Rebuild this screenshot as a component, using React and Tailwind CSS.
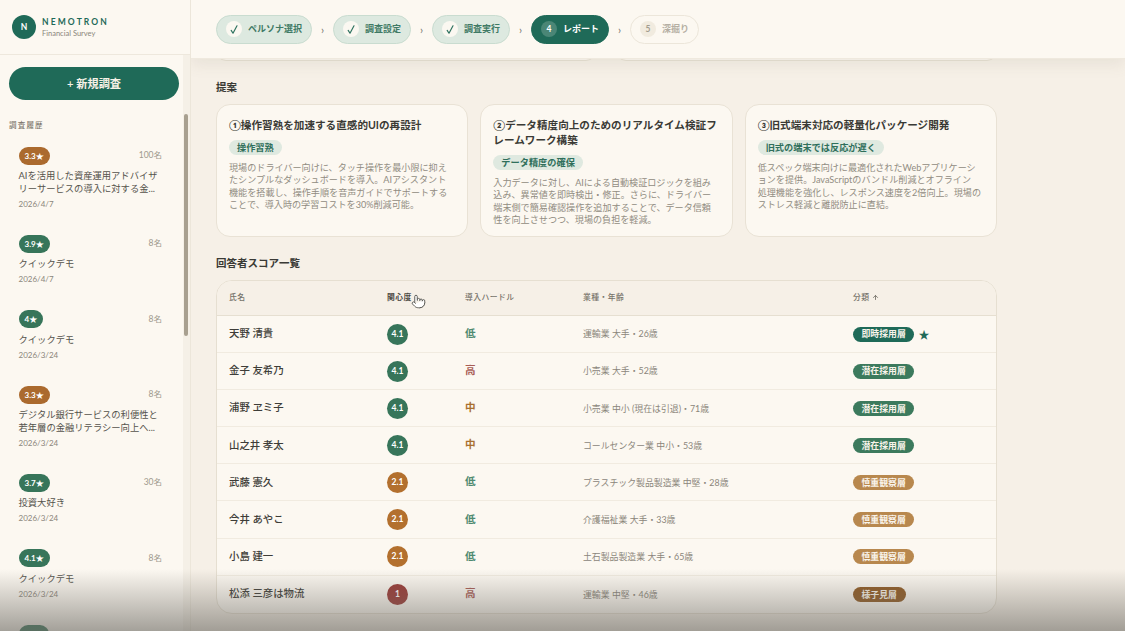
import React from "react";
import { Pointer, ArrowUp } from "lucide-react";

const hist = [
  { s: "3.3★", c: "bg-[#ab6a2e]", n: "100名", t: "AIを活用した資産運用アドバイザリーサービスの導入に対する金...", d: "2026/4/7" },
  { s: "3.9★", c: "bg-[#37755a]", n: "8名", t: "クイックデモ", d: "2026/4/7" },
  { s: "4★", c: "bg-[#37755a]", n: "8名", t: "クイックデモ", d: "2026/3/24" },
  { s: "3.3★", c: "bg-[#ab6a2e]", n: "8名", t: "デジタル銀行サービスの利便性と若年層の金融リテラシー向上へ...", d: "2026/3/24" },
  { s: "3.7★", c: "bg-[#37755a]", n: "30名", t: "投資大好き", d: "2026/3/24" },
  { s: "4.1★", c: "bg-[#37755a]", n: "8名", t: "クイックデモ", d: "2026/3/24" },
];
const steps = [
  { l: "ペルソナ選択", k: "done" },
  { l: "調査設定", k: "done" },
  { l: "調査実行", k: "done" },
  { l: "レポート", k: "active", i: 4 },
  { l: "深掘り", k: "todo", i: 5 },
];
const cards = [
  { t: "①操作習熟を加速する直感的UIの再設計", b: "操作習熟", d: "現場のドライバー向けに、タッチ操作を最小限に抑えたシンプルなダッシュボードを導入。AIアシスタント機能を搭載し、操作手順を音声ガイドでサポートすることで、導入時の学習コストを30%削減可能。" },
  { t: "②データ精度向上のためのリアルタイム検証フレームワーク構築", b: "データ精度の確保", d: "入力データに対し、AIによる自動検証ロジックを組み込み、異常値を即時検出・修正。さらに、ドライバー端末側で簡易確認操作を追加することで、データ信頼性を向上させつつ、現場の負担を軽減。" },
  { t: "③旧式端末対応の軽量化パッケージ開発", b: "旧式の端末では反応が遅く", d: "低スペック端末向けに最適化されたWebアプリケーションを提供。JavaScriptのバンドル削減とオフライン\n処理機能を強化し、レスポンス速度を2倍向上。現場のストレス軽減と離脱防止に直結。" },
];
const G = "bg-[#37755a]", A = "bg-[#b3702e]", R = "bg-[#993a36]";
const LOW = "text-[#4f8a70]", HIGH = "text-[#a85c55]", MID = "text-[#a9702f]";
const P1 = "bg-[#1f6a58]", P2 = "bg-[#3c7a5d]", P3 = "bg-[#b8884e]", P4 = "bg-[#8f5a24]";
const rows = [
  ["天野 清貴", "4.1", G, "低", LOW, "運輸業 大手・26歳", "即時採用層", P1, true],
  ["金子 友希乃", "4.1", G, "高", HIGH, "小売業 大手・52歳", "潜在採用層", P2],
  ["浦野 ヱミ子", "4.1", G, "中", MID, "小売業 中小 (現在は引退)・71歳", "潜在採用層", P2],
  ["山之井 孝太", "4.1", G, "中", MID, "コールセンター業 中小・53歳", "潜在採用層", P2],
  ["武藤 憲久", "2.1", A, "低", LOW, "プラスチック製品製造業 中堅・28歳", "慎重観察層", P3],
  ["今井 あやこ", "2.1", A, "低", LOW, "介護福祉業 大手・33歳", "慎重観察層", P3],
  ["小島 建一", "2.1", A, "低", LOW, "土石製品製造業 大手・65歳", "慎重観察層", P3],
  ["松添 三彦は物流", "1", R, "高", HIGH, "運輸業 中堅・46歳", "様子見層", P4],
];
const cols = "grid grid-cols-[158px_78px_118px_270px_1fr] items-center pl-3";

function Step({ s }) {
  const pill =
    s.k === "done" ? "bg-[#dde9e0] border-[#c9dcd0] text-[#3f7a65]" :
    s.k === "active" ? "bg-[#1f6a58] border-[#1f6a58] text-white" :
    "bg-[#fcf8f1] border-[#ece6da] text-[#b5afa3]";
  const dot =
    s.k === "done" ? "bg-[#fbf8f1] text-[#2f7360]" :
    s.k === "active" ? "bg-[#4a8676] text-white" :
    "bg-[#f1ebdf] text-[#a39c8e]";
  return (
    <div className={`flex h-[29px] items-center gap-[6px] rounded-full border pr-[9px] pl-[9px] text-[9px] font-semibold ${pill}`}>
      <span className={`flex h-[16px] w-[16px] items-center justify-center rounded-full text-[8.5px] font-bold ${dot}`}>
        {s.k === "done" ? (
          <svg width="10" height="11" viewBox="0 0 10 11" fill="none" stroke="currentColor" strokeWidth="1.2" strokeLinecap="round" strokeLinejoin="round">
            <path d="M2.2 6.4 L4 9.2 L8 1.8" />
          </svg>
        ) : s.i}
      </span>
      <span className="whitespace-nowrap">{s.l}</span>
    </div>
  );
}

export default function App() {
  return (
    <div className="relative flex h-[631px] w-[1125px] overflow-hidden bg-[#f6f0e7] text-[#3a3a35] [font-family:Lato,'Noto_Sans_CJK_JP',sans-serif]">
      <aside className="flex h-full w-[191px] shrink-0 flex-col overflow-hidden border-r border-[#ece6da] bg-[#fcf8f1]">
        <div className="flex h-[55px] shrink-0 items-center gap-[6px] border-b border-[#eee8dd] pl-3">
          <div className="flex h-[24px] w-[24px] items-center justify-center rounded-full bg-[#1f6a58] text-[8.5px] font-bold text-white">N</div>
          <div>
            <div className="text-[8.5px] leading-[12px] font-bold tracking-[0.25em] text-[#1f6a58]">NEMOTRON</div>
            <div className="mt-[1px] text-[7.5px] leading-[10px] text-[#8b867b]">Financial Survey</div>
          </div>
        </div>
        <div className="flex min-h-0 flex-1">
          <div className="min-w-0 flex-1">
            <div className="mt-3 ml-[9px] flex h-[33px] w-[170px] items-center justify-center rounded-full bg-[#1f6a58] pt-[2px] text-[11.2px] font-semibold text-[#f6f1e6]">+ 新規調査</div>
            <div className="mt-[21px] ml-[9px] text-[7.5px] leading-[10px] font-medium tracking-[0.16em] text-[#7e796e]">調査履歴</div>
            <div className="mt-[15.5px] flex flex-col gap-[25px] pr-[21px] pl-[18.5px]">
              {hist.map((h, i) => (
                <div key={i}>
                  <div className="flex items-center justify-between">
                    <span className={`flex h-[18px] items-center rounded-full px-[6px] text-[8px] font-bold text-white ${h.c}`}>{h.s}</span>
                    <span className="text-[8.5px] text-[#a09a8e]">{h.n}</span>
                  </div>
                  <div className="mt-[5.5px] text-[9.3px] leading-[12.5px] text-[#55534c]">{h.t}</div>
                  <div className="mt-[3.5px] text-[8px] leading-[11px] text-[#8b867b]">{h.d}</div>
                </div>
              ))}
              <div className="h-[18px] w-[30px] rounded-full bg-[#37755a]"></div>
            </div>
          </div>
          <div className="w-[7px] shrink-0 bg-[#f5f0e7] pt-[59px]">
            <div className="ml-[1px] h-[222px] w-[4px] rounded-full bg-[#a8a090]"></div>
          </div>
        </div>
      </aside>

      <main className="min-w-0 flex-1 overflow-hidden">
        <header className="relative z-10 flex h-[59px] items-center border-b border-[#efe9de] bg-[#fcf8f1] pl-[25px] shadow-[0_6px_14px_rgba(120,110,90,0.10)]">
          {steps.map((s, i) => (
            <React.Fragment key={i}>
              <Step s={s} />
              {i < 4 && <span className="w-[21px] text-center text-[11px] leading-none text-[#77736a]">›</span>}
            </React.Fragment>
          ))}
        </header>

        <div className="ml-[25px] w-[781px]">
          <div className="-mt-[8px] grid h-[10px] grid-cols-[380px_1fr] gap-[20px]">
            <div className="rounded-b-[10px] border border-[#e8e1d4] bg-[#fcf8f1]"></div>
            <div className="rounded-b-[10px] border border-[#e8e1d4] bg-[#fcf8f1]"></div>
          </div>

          <h2 className="mt-[19px] text-[10.5px] leading-[15px] font-bold">提案</h2>
          <div className="mt-[9px] grid h-[133px] grid-cols-3 gap-3">
            {cards.map((c, i) => (
              <div key={i} className="rounded-[14px] border border-[#e9e2d5] bg-[#fcf8f1] pt-[13px] pr-[13.4px] pl-3">
                <div className="text-[10.6px] leading-[15px] font-bold text-[#3a3a35]">{c.t}</div>
                <span className="mt-[6px] inline-flex h-[15px] items-center rounded-full bg-[#dfe9e0] px-2 text-[9.2px] font-semibold text-[#2f6f5b]">{c.b}</span>
                <p className="mt-[5px] text-[9.1px] leading-[12.3px] whitespace-pre-line text-[#918c81]">{c.d}</p>
              </div>
            ))}
          </div>

          <h2 className="mt-[19px] text-[10.5px] leading-[15px] font-bold">回答者スコア一覧</h2>
          <div className="mt-[9px] overflow-hidden rounded-[16px] border border-[#e6dfd1] bg-[#fcf8f1]">
            <div className={`${cols} h-[35px] border-b border-[#e6dfd1] bg-[#f6f0e7] pb-[1px] text-[7.8px] font-medium tracking-[0.06em] text-[#77736a]`}>
              <span>氏名</span>
              <span className="font-bold text-[#4c4a44]">関心度</span>
              <span>導入ハードル</span>
              <span>業種・年齢</span>
              <span className="flex items-center gap-[2px]">分類 <ArrowUp size={7} strokeWidth={3} /></span>
            </div>
            {rows.map((r, i) => (
              <div key={i} className={`${cols} h-[37.1px] ${i < 7 ? "border-b border-[#f1ebe0]" : ""}`}>
                <span className="text-[10.4px] font-medium text-[#3e3d38]">{r[0]}</span>
                <span className={`flex h-[21px] w-[21px] items-center justify-center rounded-full text-[8.5px] font-bold text-white ${r[2]}`}>{r[1]}</span>
                <span className={`text-[10.6px] font-bold ${r[4]}`}>{r[3]}</span>
                <span className="text-[8.9px] whitespace-nowrap text-[#8b867b]">{r[5]}</span>
                <span className="flex items-center gap-[4px]">
                  <span className={`flex h-[15px] items-center rounded-full px-[8.5px] text-[8.9px] font-semibold whitespace-nowrap text-[#f8f3ea] ${r[7]}`}>{r[6]}</span>
                  {r[8] && <span className="text-[11px] leading-none text-[#1f6a58]">★</span>}
                </span>
              </div>
            ))}
          </div>
        </div>
      </main>

      <Pointer size={15} strokeWidth={1.4} className="absolute top-[294px] left-[411px] fill-white text-[#4a4a46]" />
      <div className="pointer-events-none absolute right-0 bottom-0 left-0 h-[62px] bg-gradient-to-b from-transparent to-[rgba(110,107,100,0.62)]"></div>
    </div>
  );
}
